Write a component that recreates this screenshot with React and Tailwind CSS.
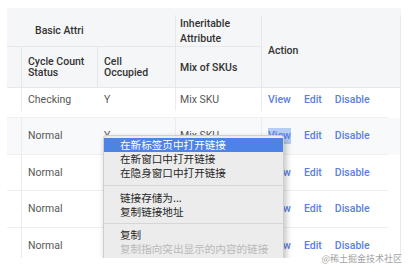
import React from 'react';

const rows = [
  { status: 'Checking', cell: 'Y', mix: 'Mix SKU', h: 'h-[29px] pb-[6px]' },
  { status: 'Normal', cell: 'Y', mix: 'Mix SKU', h: 'h-[36px]', hover: true },
  { status: 'Normal', cell: 'Y', mix: 'Mix SKU', h: 'h-[35px]' },
  { status: 'Normal', cell: 'Y', mix: 'Mix SKU', h: 'h-[36px]' },
  { status: 'Normal', cell: 'Y', mix: 'Mix SKU', h: 'h-[36px]' },
];

function MenuItem({ children, active, disabled }) {
  return (
    <div
      className={
        'h-[14px] flex items-center pl-[16px] whitespace-nowrap ' +
        (active ? 'bg-[#4d82e6] text-white' : disabled ? 'text-[#b8b8b8]' : 'text-[#262626]')
      }
    >
      {children}
    </div>
  );
}

export default function App() {
  return (
    <div className="relative w-[409px] h-[272px] bg-white overflow-hidden font-['Roboto',sans-serif]">
      <div className="relative h-[258px] overflow-hidden pl-[7px] pt-[8px]">
        <div className="w-[394px] bg-[#f5f6f8] pt-[7px]">
          <div className="border-r border-[#e8e9eb] text-[10.5px]">
            {/* header */}
            <div className="grid grid-cols-[15px_76px_78px_86px_139px] grid-rows-[32px_41px] text-[#333] font-medium">
              <div className="col-span-3 flex items-center pl-[28px] pt-[1px] border-b border-r border-[#e6e7e9]">
                Basic Attri
              </div>
              <div className="flex flex-col justify-center pl-[4px] pt-[1px] leading-[15px] border-b border-r border-[#e6e7e9]">
                <span>Inheritable</span>
                <span>Attribute</span>
              </div>
              <div className="row-span-2 flex items-center pl-[6px] border-b border-[#e6e7e9]">Action</div>
              <div className="border-r border-b border-[#e6e7e9]" />
              <div className="flex flex-col justify-center pl-[6px] leading-[11.5px] border-b border-r border-[#e6e7e9]">
                <span>Cycle Count</span>
                <span>Status</span>
              </div>
              <div className="flex flex-col justify-center pl-[6px] leading-[11.5px] border-b border-r border-[#e6e7e9]">
                <span>Cell</span>
                <span>Occupied</span>
              </div>
              <div className="flex items-center pl-[4px] pt-[1px] border-b border-r border-[#e6e7e9]">Mix of SKUs</div>
            </div>
            {/* body */}
            <div className="bg-white text-[#575757] text-[10.5px]">
              {rows.map((r, i) => (
                <div key={i} className={r.hover ? 'bg-[#f8f9fb]' : 'bg-white'}>
                  <div className={'grid grid-cols-[15px_76px_78px_86px_139px] ' + r.h}>
                    <div className="border-r border-[#ebecee]" />
                    <div className="flex items-center pl-[6px]">{r.status}</div>
                    <div className="flex items-center pl-[6px] border-r border-[#ebecee]">{r.cell}</div>
                    <div className="flex items-center pl-[4px] border-r border-[#ebecee]">{r.mix}</div>
                    <div className="flex items-center pl-[6px] gap-[13px] text-[#5b80e2] font-medium">
                      <span className={r.hover ? 'bg-[#b6cdf5]' : ''}>View</span>
                      <span>Edit</span>
                      <span>Disable</span>
                    </div>
                  </div>
                  <div className="w-[381px] h-px bg-[#eeeff1]" />
                </div>
              ))}
            </div>
          </div>
        </div>

        {/* context menu */}
        <div className="absolute left-[103px] top-[135px] w-[181px] pt-[2px] pb-[4px] bg-[#ececec] border border-[#cfcfcf] rounded-[3px] shadow-[2px_3px_6px_rgba(0,0,0,0.25)] text-[10.6px] leading-[14px] font-['Noto_Sans_CJK_SC',sans-serif]">
          <MenuItem active>在新标签页中打开链接</MenuItem>
          <MenuItem>在新窗口中打开链接</MenuItem>
          <MenuItem>在隐身窗口中打开链接</MenuItem>
          <div className="my-[5px] h-px bg-[#d6d6d6]" />
          <MenuItem>链接存储为...</MenuItem>
          <MenuItem>复制链接地址</MenuItem>
          <div className="my-[4px] h-px bg-[#d6d6d6]" />
          <MenuItem>复制</MenuItem>
          <MenuItem disabled>复制指向突出显示的内容的链接</MenuItem>
          <MenuItem>使用 Google 搜索“View”</MenuItem>
        </div>
      </div>

      <div className="absolute right-[7px] top-[253px] text-[9px] leading-[12px] text-[#a3a3a3] font-['Noto_Sans_CJK_SC',sans-serif]">
        @稀土掘金技术社区
      </div>
    </div>
  );
}
